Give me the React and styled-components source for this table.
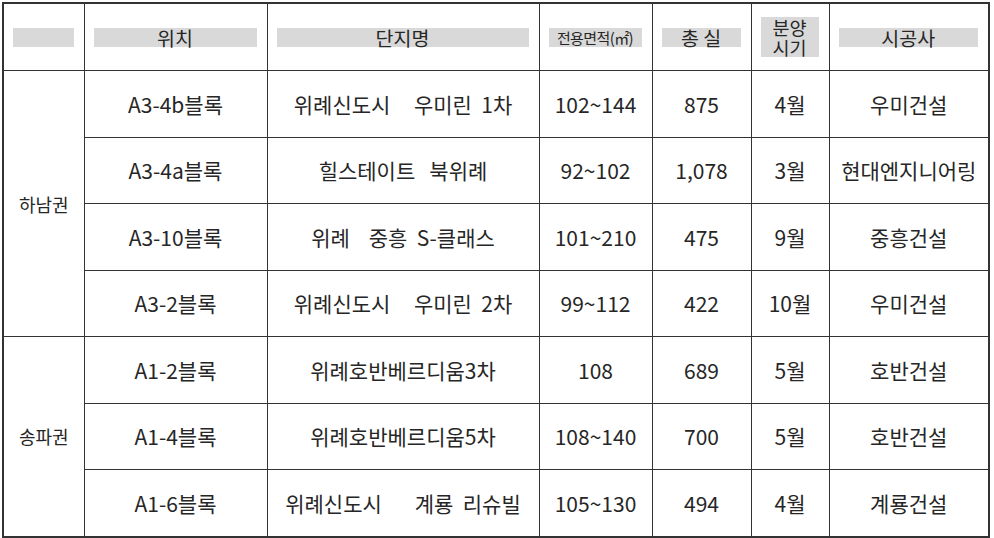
import React from "react";
import styled, { createGlobalStyle } from "styled-components";

const Global = createGlobalStyle`
  html, body { margin: 0; padding: 0; background: #fff; }
  body { font-family: "Noto Sans CJK KR", "Noto Sans", sans-serif; color: #262626; }
`;

const Page = styled.div`
  padding: 2px 0 0 2px;
`;

const Table = styled.table`
  border-collapse: collapse;
  table-layout: fixed;
  width: 988px;
  border: 2px solid #333;
`;

const HeadCell = styled.th`
  height: 66px;
  padding: 0 10px 0 9px;
  border: 1px solid #333;
  font-weight: 400;
  vertical-align: middle;
`;

const HeadBar = styled.div`
  background: #d9d9d9;
  font-size: ${(p) => p.$size || 19.5}px;
  line-height: ${(p) => (p.$two ? "20px" : "19px")};
  min-height: 19px;
  text-align: center;
  white-space: nowrap;
  letter-spacing: ${(p) => p.$ls || "0"};
  color: #262626;
`;

const Cell = styled.td`
  height: 65.5px;
  padding: 0;
  border: 1px solid #333;
  text-align: center;
  vertical-align: middle;
  font-size: 21px;
  white-space: pre;
  color: #262626;
`;

const RegionCell = styled(Cell)`
  font-size: 18px;
`;

const cols = [81, 183, 272, 113, 99, 78, 160];

const rows = [
  ["하남권", 4, "A3-4b블록", "위례신도시     우미린  1차", "102~144", "875", "4월", "우미건설"],
  [null, 0, "A3-4a블록", "힐스테이트   북위례", "92~102", "1,078", "3월", "현대엔지니어링"],
  [null, 0, "A3-10블록", "위례    중흥  S-클래스", "101~210", "475", "9월", "중흥건설"],
  [null, 0, "A3-2블록", "위례신도시     우미린  2차", "99~112", "422", "10월", "우미건설"],
  ["송파권", 3, "A1-2블록", "위례호반베르디움3차", "108", "689", "5월", "호반건설"],
  [null, 0, "A1-4블록", "위례호반베르디움5차", "108~140", "700", "5월", "호반건설"],
  [null, 0, "A1-6블록", "위례신도시       계룡  리슈빌", "105~130", "494", "4월", "계룡건설"],
];

export default function App() {
  return (
    <Page>
      <Global />
      <Table>
        <colgroup>
          {cols.map((w, i) => (
            <col key={i} style={{ width: w }} />
          ))}
        </colgroup>
        <thead>
          <tr>
            <HeadCell><HeadBar>&nbsp;</HeadBar></HeadCell>
            <HeadCell><HeadBar>위치</HeadBar></HeadCell>
            <HeadCell><HeadBar>단지명</HeadBar></HeadCell>
            <HeadCell><HeadBar $size={15} $ls="-0.6px">전용면적(㎡)</HeadBar></HeadCell>
            <HeadCell><HeadBar>총 실</HeadBar></HeadCell>
            <HeadCell><HeadBar $two $size={18.5}>분양<br />시기</HeadBar></HeadCell>
            <HeadCell><HeadBar>시공사</HeadBar></HeadCell>
          </tr>
        </thead>
        <tbody>
          {rows.map((r, i) => (
            <tr key={i}>
              {r[0] && <RegionCell rowSpan={r[1]}>{r[0]}</RegionCell>}
              {r.slice(2).map((v, j) => (
                <Cell key={j}>{v}</Cell>
              ))}
            </tr>
          ))}
        </tbody>
      </Table>
    </Page>
  );
}
